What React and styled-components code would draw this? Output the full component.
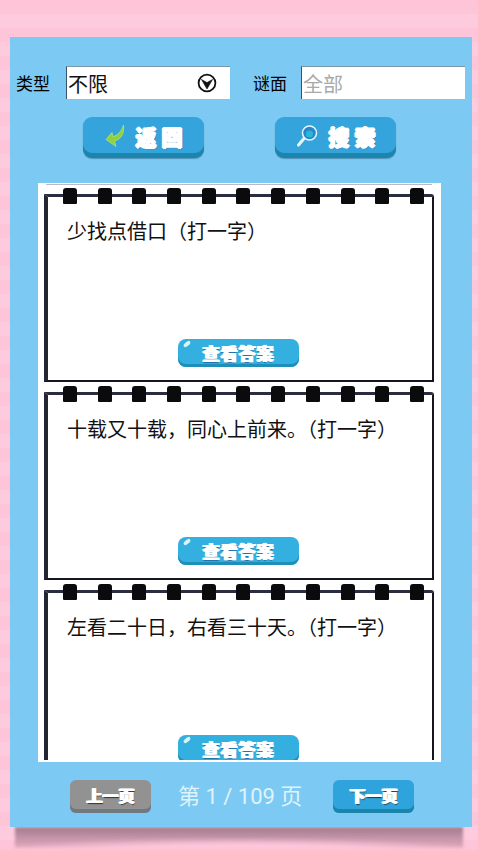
import styled, { createGlobalStyle } from "styled-components"

const riddles = [
	"少找点借口（打一字）",
	"十载又十载，同心上前来。（打一字）",
	"左看二十日，右看三十天。（打一字）",
]

const CJK = `"Noto Sans CJK SC", "Noto Sans", sans-serif`

const GlobalStyle = createGlobalStyle`
	html, body {
		margin: 0;
		padding: 0;
	}
	body {
		width: 478px;
		height: 850px;
		overflow: hidden;
		font-family: ${CJK};
	}
	* {
		box-sizing: border-box;
	}
`

const App = () => (
	<Page>
		<GlobalStyle />
		<Panel>
			<FilterRow>
				<Label>类型</Label>
				<Select>
					不限
					<svg width="20" height="20" viewBox="0 0 20 20">
						<circle cx="10" cy="10" r="8.4" fill="#fff" stroke="#111" strokeWidth="1.8" />
						<path d="M4.4 6.4 L10 16 L15.6 6.4 L10 9.6 Z" fill="#111" stroke="#111" strokeWidth="0.6" strokeLinejoin="round" />
					</svg>
				</Select>
				<Label $wide>谜面</Label>
				<Input>全部</Input>
			</FilterRow>

			<ActionRow>
				<BigButton>
					<svg width="20" height="24" viewBox="0 0 20 24">
						<path d="M18.5 1 C19.5 9 16.5 15 9.5 17 L11 22.5 L1 15.5 L7 8.5 L7.8 12.5 C12.5 12 16.5 7 18.5 1 Z" fill="#8fd23f" stroke="#c5ee77" strokeWidth="0.6" />
					</svg>
					<BigText>返 回</BigText>
				</BigButton>
				<BigButton>
					<svg width="22" height="24" viewBox="0 0 22 24">
						<circle cx="13.5" cy="9" r="7" fill="#2a86c8" stroke="#e8f6ff" strokeWidth="1.5" />
						<circle cx="13.5" cy="10" r="3.6" fill="#28b7d8" />
						<path d="M8 14.5 L2.5 21" stroke="#e8f6ff" strokeWidth="3" strokeLinecap="round" />
					</svg>
					<BigText>搜 索</BigText>
				</BigButton>
			</ActionRow>

			<List>
				<Scroller>
					{riddles.map(text => (
						<Card key={text}>
							<Rings>
								{Array.from({ length: 11 }, (_, i) => <Ring key={i} />)}
							</Rings>
							<Question>{text}</Question>
							<AnswerButton>查看答案</AnswerButton>
						</Card>
					))}
				</Scroller>
			</List>

			<Pager>
				<PageButton $off>上一页</PageButton>
				<PageInfo>第 1 / 109 页</PageInfo>
				<PageButton>下一页</PageButton>
			</Pager>
		</Panel>
	</Page>
)

const Page = styled.div`
	isolation: isolate;
	width: 478px;
	height: 850px;
	padding: 37px 6px 23px 10px;
	background: repeating-linear-gradient(180deg, #fec4d8 0, #fec4d8 14px, #fdcbdd 14px, #fdcbdd 28px);
`

const Panel = styled.div`
	position: relative;
	height: 790px;
	padding-top: 29px;
	display: flex;
	flex-direction: column;
	background-color: #7ccaf3;

	&::after {
		content: "";
		position: absolute;
		z-index: -1;
		top: 100%;
		left: 5px;
		right: 9px;
		height: 21px;
		background:
			radial-gradient(ellipse 60% 75% at 50% 125%, #fdc6da 55%, rgba(253, 198, 218, 0) 100%),
			linear-gradient(180deg, rgba(125, 85, 105, .7), rgba(190, 140, 160, .45));
		filter: blur(1.5px);
	}
`

const FilterRow = styled.div`
	display: flex;
	align-items: center;
	height: 33px;
	padding-left: 6px;
`

const Label = styled.div`
	width: 34px;
	margin-left: ${p => p.$wide ? "23px" : "0"};
	margin-right: ${p => p.$wide ? "14px" : "16px"};
	font-size: 17px;
	line-height: 33px;
	color: #000;
	white-space: nowrap;
`

const Select = styled.div`
	width: 164px;
	height: 33px;
	display: flex;
	align-items: center;
	justify-content: space-between;
	padding: 0 13px 0 1px;
	background-color: #fff;
	border-left: 1px solid #34566c;
	border-top: 1px solid #7b98a9;
	font-size: 20px;
	color: #111;
`

const Input = styled.div`
	width: 164px;
	height: 33px;
	display: flex;
	align-items: center;
	padding-left: 1px;
	background-color: #fff;
	border-left: 1px solid #34566c;
	border-top: 1px solid #7b98a9;
	font-size: 20px;
	color: #a9a9a9;
`

const ActionRow = styled.div`
	display: flex;
	justify-content: center;
	gap: 71px;
	margin-top: 18px;
	padding-right: 3px;
`

const BigButton = styled.div`
	width: 121px;
	height: 41px;
	display: flex;
	align-items: center;
	justify-content: center;
	gap: 11px;
	padding-bottom: 3px;
	border-radius: 9px;
	background-color: #35a4dc;
	box-shadow: inset 0 -5px 0 #1a86ad, 0 1px 1px rgba(40, 90, 130, .5);
`

const BigText = styled.div`
	font-size: 21px;
	font-weight: 900;
	line-height: 1;
	white-space: pre;
	color: #fff;
	text-shadow: 1px 0 0 #fff, -1px 0 0 #fff, 0 1px 0 #fff, 0 -1px 0 #fff, 1px 1px 1px #1c6ea8;
`

const List = styled.div`
	width: 403px;
	height: 579px;
	margin: 25px 0 0 28px;
	padding: 1px 7px 2px 6px;
	background-color: #fff;
`

const Scroller = styled.div`
	height: 100%;
	overflow: hidden;

	&::before {
		content: "";
		display: block;
		height: 1px;
		margin: 0 2px 9px;
		background-color: #b9bcc2;
	}
`

const Card = styled.div`
	position: relative;
	height: 188px;
	margin-bottom: 10px;
	padding: 20px 0 0 19px;
	border: solid #14161f;
	border-width: 3px 2px 2px 4px;
	border-top-color: #2a2c40;
	border-left-color: #242633;
	border-top-right-radius: 3px;
	background-color: #fff;
`

const Rings = styled.div`
	position: absolute;
	top: -9px;
	left: 15px;
	right: 8px;
	display: flex;
	justify-content: space-between;
`

const Ring = styled.div`
	width: 14px;
	height: 16px;
	border-radius: 3px 3px 1px 1px;
	background-color: #0b0b0d;
`

const Question = styled.div`
	font-size: 20px;
	line-height: 28px;
	color: #111;
	white-space: nowrap;
`

const AnswerButton = styled.div`
	position: absolute;
	top: 142px;
	left: 130px;
	width: 121px;
	height: 28px;
	display: flex;
	align-items: center;
	justify-content: center;
	padding-bottom: 2px;
	border-radius: 8px;
	background-color: #34b0e0;
	box-shadow: inset 0 -3px 0 #1d8fb9;
	font-size: 17px;
	font-weight: 900;
	letter-spacing: 1px;
	color: #fff;
	text-shadow: 1px 0 0 #fff, -1px 0 0 #fff, 0 1px 1px #1c6ea8;

	&::before {
		content: "";
		position: absolute;
		top: 3px;
		left: 5px;
		width: 8px;
		height: 4px;
		border-radius: 50%;
		background-color: #d8f3fc;
		transform: rotate(-40deg);
	}
`

const Pager = styled.div`
	display: flex;
	align-items: center;
	justify-content: center;
	gap: 27px;
	margin-top: 18px;
	padding-left: 2px;
`

const PageButton = styled.div`
	width: 81px;
	height: 33px;
	display: flex;
	align-items: center;
	justify-content: center;
	padding-bottom: 3px;
	border-radius: 6px;
	background-color: ${p => p.$off ? "#929292" : "#2fa3dc"};
	box-shadow: inset 0 -4px 0 ${p => p.$off ? "#6f7a80" : "#1b84a8"};
	font-size: 16px;
	font-weight: 900;
	color: #fff;
	text-shadow: 1px 0 0 #fff, -1px 0 0 #fff, 1px 1px 1px #333;
`

const PageInfo = styled.div`
	width: 128px;
	padding-right: 10px;
	font-family: Roboto, ${CJK};
	font-size: 22px;
	line-height: 33px;
	text-align: center;
	white-space: nowrap;
	color: #dff3fc;
`

export default App
